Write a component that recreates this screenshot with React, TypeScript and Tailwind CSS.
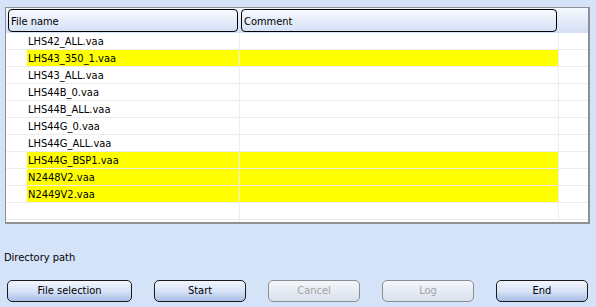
import React from "react";

const rows: { name: string; hl: boolean }[] = [
  { name: "LHS42_ALL.vaa", hl: false },
  { name: "LHS43_350_1.vaa", hl: true },
  { name: "LHS43_ALL.vaa", hl: false },
  { name: "LHS44B_0.vaa", hl: false },
  { name: "LHS44B_ALL.vaa", hl: false },
  { name: "LHS44G_0.vaa", hl: false },
  { name: "LHS44G_ALL.vaa", hl: false },
  { name: "LHS44G_BSP1.vaa", hl: true },
  { name: "N2448V2.vaa", hl: true },
  { name: "N2449V2.vaa", hl: true },
  { name: "", hl: false },
  { name: "", hl: false },
];

function Btn({ label, w, disabled }: { label: string; w: string; disabled?: boolean }) {
  return (
    <div
      className={
        "h-[22px] flex items-center justify-center pt-[1px] rounded-[5px] border " +
        w +
        " " +
        (disabled
          ? "border-[#8d8d8d] bg-gradient-to-b from-[#f4f6fa] to-[#d9e1ee] text-[#a3a3a3]"
          : "border-[#1a1a1a] bg-gradient-to-b from-[#f3f6fc] via-[#d9e4f7] to-[#a9bde6] text-black")
      }
    >
      {label}
    </div>
  );
}

export default function App() {
  return (
    <div
      className="w-[596px] h-[307px] bg-[#d5e3f9] flex flex-col overflow-hidden text-[11px] text-black"
      style={{ fontFamily: "Tahoma, 'DejaVu Sans Condensed', 'Liberation Sans', sans-serif" }}
    >
      <div className="ml-[5px] mt-[7px] w-[585px] h-[217px] border border-r-2 border-b-2 border-[#8e9096] bg-white overflow-hidden flex flex-col">
        <div className="h-[25px] shrink-0 bg-gradient-to-b from-[#f5f8fd] to-[#d2dff5] flex pt-[1px] pl-[2px]">
          <div className="w-[230px] h-[23px] rounded-[4px] border border-black bg-gradient-to-b from-[#f8fafe] to-[#d5e1f6] flex items-center pl-[2px] pt-[4px]">
            File name
          </div>
          <div className="ml-[3px] w-[316px] h-[23px] rounded-[4px] border border-black bg-gradient-to-b from-[#f8fafe] to-[#d5e1f6] flex items-center pl-[2px] pt-[4px]">
            Comment
          </div>
        </div>
        {rows.map((r, i) => (
          <div key={i} className="h-[17px] shrink-0 flex border-b border-[#ededed]">
            <div className="w-[21px] shrink-0" />
            <div
              className={
                "w-[212px] shrink-0 leading-[16px] pt-[1px] pl-[1px] whitespace-nowrap " + (r.hl ? "bg-[#ffff00]" : "")
              }
            >
              {r.name}
            </div>
            <div className="w-[1px] shrink-0 bg-[#ededed]" />
            <div className={"w-[318px] shrink-0 " + (r.hl ? "bg-[#ffff00]" : "")} />
            <div className="w-[1px] shrink-0 bg-[#ededed]" />
            <div className="flex-1" />
          </div>
        ))}
      </div>
      <div className="ml-[4px] mt-[25px] h-[16px] leading-[16px] pt-[1px]">Directory path</div>
      <div className="ml-[7px] mt-[15px] flex gap-[22px]">
        <Btn label="File selection" w="w-[125px]" />
        <Btn label="Start" w="w-[92px]" />
        <Btn label="Cancel" w="w-[92px]" disabled />
        <Btn label="Log" w="w-[92px]" disabled />
        <Btn label="End" w="w-[92px]" />
      </div>
    </div>
  );
}
